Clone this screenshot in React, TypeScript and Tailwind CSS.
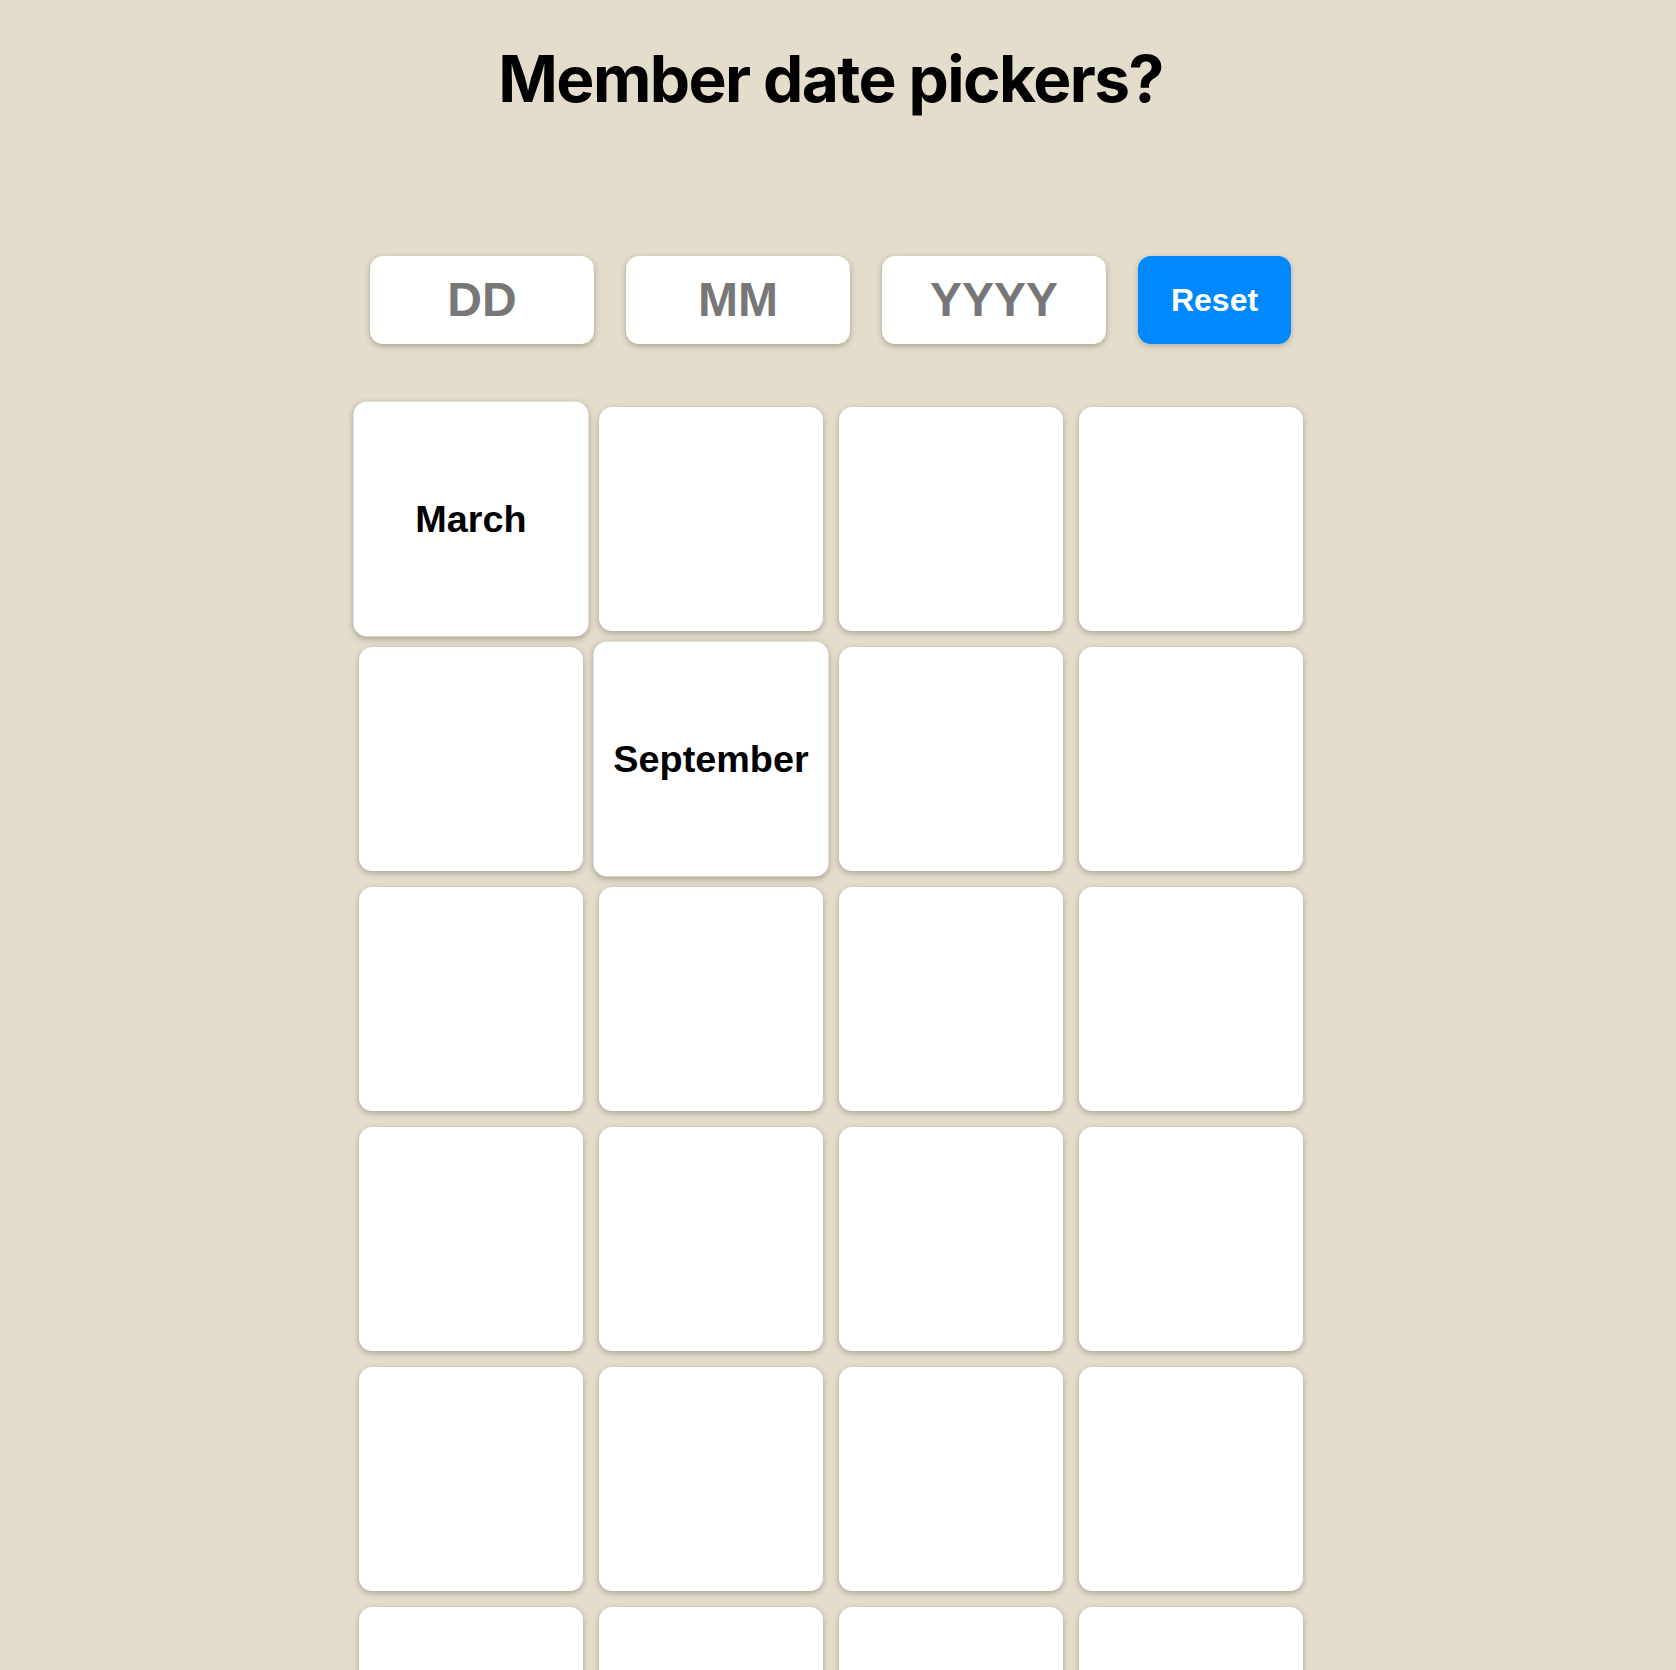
import React from "react";

const cards: (string | null)[] = [
  "March", null, null, null,
  null, "September", null, null,
  null, null, null, null,
  null, null, null, null,
  null, null, null, null,
  null, null, null, null,
  null, null, null, null,
];

export default function App() {
  return (
    <div className="h-[1670px] overflow-hidden bg-[#e5ddcc] pr-[15px]" style={{ fontFamily: '"Liberation Sans", Arial, sans-serif' }}>
      <div className="flex flex-col items-center">
        <h1
          className="mt-[47px] text-[64px] font-bold leading-none tracking-tight text-black"
          style={{ fontFamily: 'Inter, "Liberation Sans", sans-serif' }}
        >
          Member date pickers?
        </h1>
        <div className="mt-[145px] flex gap-[32px]">
          {["DD", "MM", "YYYY"].map((t) => (
            <div
              key={t}
              className="flex h-[88px] w-[224px] items-center justify-center rounded-[13px] bg-white text-[48px] font-bold text-[#777777] shadow-[0_2px_6px_rgba(0,0,0,0.28)]"
            >
              {t}
            </div>
          ))}
          <button className="flex h-[88px] w-[153px] items-center justify-center rounded-[13px] bg-[#0088ff] text-[32px] font-bold text-white shadow-[0_2px_6px_rgba(0,0,0,0.22)]">
            Reset
          </button>
        </div>
        <div className="mt-[63px] grid grid-cols-[repeat(4,224px)] gap-[16px]">
          {cards.map((c, i) => (
            <div
              key={i}
              className={
                "flex h-[224px] w-[224px] items-center justify-center rounded-[13px] bg-white text-[36px] font-bold text-black shadow-[0_2px_6px_rgba(0,0,0,0.28)]" +
                (c ? " scale-105" : "")
              }
            >
              {c}
            </div>
          ))}
        </div>
      </div>
    </div>
  );
}
